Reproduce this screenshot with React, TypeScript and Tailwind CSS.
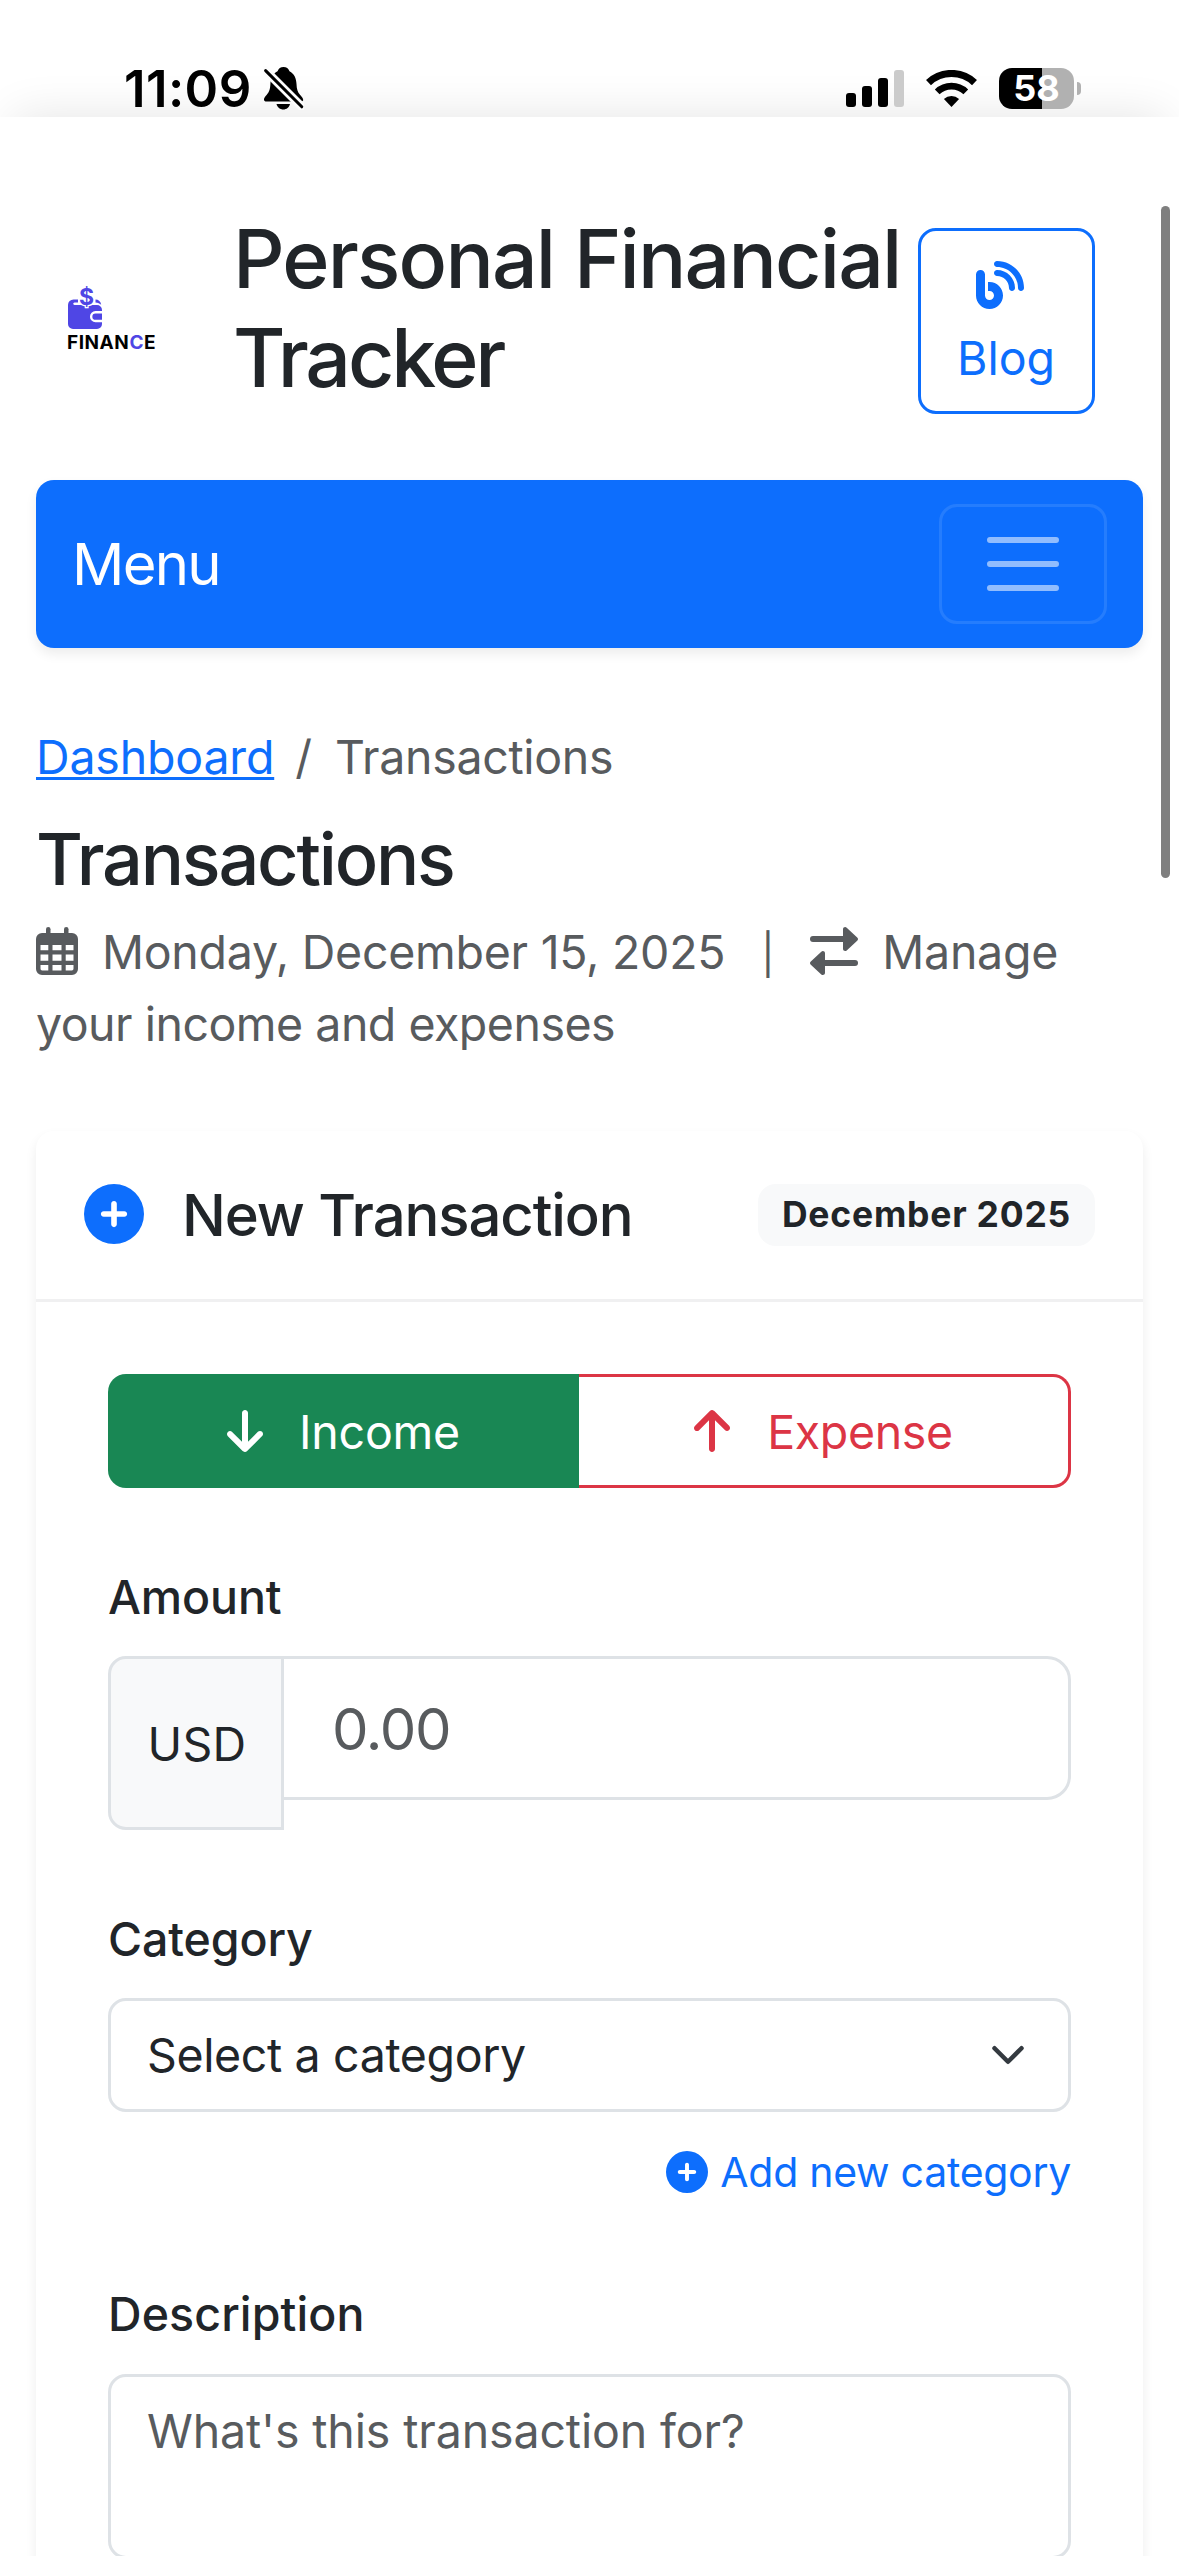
import { FaArrowDown, FaArrowUp, FaBlog, FaCirclePlus } from "react-icons/fa6";

const CalendarIcon = () => (
  <svg className="inline w-[42px] h-12 mr-6 align-[-6px]" viewBox="0 0 42 48" fill="currentColor">
    <rect x="10" y="0" width="4.500" height="12" rx="2.250" />
    <rect x="28" y="0" width="4.500" height="12" rx="2.250" />
    <path
      fillRule="evenodd"
      d="M6 6h30a6 6 0 0 1 6 6v30a6 6 0 0 1-6 6H6a6 6 0 0 1-6-6V12a6 6 0 0 1 6-6zM4.500 18v5.200h7.800V18zM16.500 18v5.200h9V18zM29.700 18v5.200h7.800V18zM4.500 27.500v6.200h7.800v-6.200zM16.500 27.500v6.200h9v-6.200zM29.700 27.500v6.200h7.800v-6.200zM6 38h-1.500v3.500c0 1.200.6 2 1.800 2h6V38zM16.500 38v5.500h9V38zM29.700 38v5.500h6c1.200 0 1.800-.8 1.800-2V38z"
    />
  </svg>
);

const ExchangeIcon = () => (
  <svg className="inline size-12 mr-6 align-[-6px]" viewBox="0 0 48 48" fill="currentColor">
    <rect x="0" y="9" width="44" height="6" rx="3" />
    <path d="M33 2.300C33 .4 35.200-.6 36.700.7l10.500 9.700c1.100 1 1.100 2.300 0 3.300L36.700 23.400c-1.500 1.300-3.700.3-3.700-1.700z" />
    <rect x="4" y="33" width="44" height="6" rx="3" />
    <path d="M15 26.300c0-1.900-2.200-2.900-3.700-1.600L.8 34.400c-1.100 1-1.100 2.300 0 3.300l10.500 9.700c1.500 1.300 3.700.3 3.700-1.700z" />
  </svg>
);

const BellSlashIcon = () => (
  <svg className="w-[41px] h-[44px]" viewBox="0 0 41 44">
    <path
      d="M20.5 1c3 0 5 1.6 6 4.2 4.600 2.400 6.800 7 7 12.800.2 5.200 1.100 8.200 3.500 10.800 1.800 2 3.200 3.500 3.200 5.200 0 .9-.9 1.500-2 1.500H3.400c-1.400 0-2.400-.8-2.400-2.100 0-1.700 1.300-3 2.600-4.500C6.300 26 7.100 23.200 7.400 18c.3-5.800 2.400-10.400 7.100-12.800C15.500 2.600 17.500 1 20.500 1z"
      fill="#000"
    />
    <path d="M13.500 38h13.500c-.8 3.400-3.500 5.500-6.700 5.500s-6-2.100-6.800-5.500z" fill="#000" />
    <path d="M-3 -1L43 45" stroke="#fdfdfd" strokeWidth="8.500" />
    <path d="M2.600 4.600L38.800 40.800" stroke="#000" strokeWidth="3" strokeLinecap="round" />
  </svg>
);

const SignalIcon = () => (
  <svg className="w-[58px] h-[37px]" viewBox="0 0 58 37">
    <rect x="0" y="23" width="10" height="14" rx="3" fill="#000" />
    <rect x="16" y="16" width="10" height="21" rx="3" fill="#000" />
    <rect x="32" y="8" width="10" height="29" rx="3" fill="#000" />
    <rect x="48" y="0" width="10" height="37" rx="3" fill="#cbcbcb" />
  </svg>
);

const WifiIcon = () => (
  <svg className="w-[51px] h-[37px]" viewBox="0 0 51 37" fill="none">
    <path d="M2.500 12.600A33.600 33.600 0 0 1 48.500 12.600" stroke="#000" strokeWidth="7.200" />
    <path d="M11.200 21.900A20.700 20.700 0 0 1 39.800 21.900" stroke="#000" strokeWidth="6.800" />
    <path d="M25.500 37L17.900 29a11.400 11.400 0 0 1 15.200 0z" fill="#000" />
  </svg>
);

const Battery = () => (
  <div className="flex items-center gap-[3px]">
    <div className="flex justify-center items-center w-[75px] h-[41px] rounded-[13px] bg-[linear-gradient(90deg,#000_43px,#b1b1b1_43px)] text-[36px] leading-none font-bold text-white">
      58
    </div>
    <div className="w-1 h-[13px] rounded-r-full bg-[#b1b1b1]" />
  </div>
);

const StatusBar = () => (
  <div className="relative flex items-center h-[117px] pt-[59px] pl-[124px] pr-[98px] overflow-hidden">
    <div className="absolute inset-x-[14px] -bottom-[60px] h-[60px] shadow-[0_0_48px_rgba(0,0,0,0.11)]" />
    <span className="relative text-[51px] leading-none font-semibold tracking-[0.4px] text-black">
      11:09
    </span>
    <div className="relative ml-[11px]">
      <BellSlashIcon />
    </div>
    <div className="relative flex items-center gap-[22px] ml-auto">
      <SignalIcon />
      <WifiIcon />
      <Battery />
    </div>
  </div>
);

const Logo = () => (
  <div className="w-[88px]">
    <svg className="w-[36px] h-[43px] overflow-visible" viewBox="0 0 36 43">
      <path
        d="M0 18a5.500 5.500 0 0 1 5.500-5.500H10v3H6.500c-1.700 0-1.700 2.500 0 2.500H29a5 5 0 0 1 5 5v14a5 5 0 0 1-5 5H5a5 5 0 0 1-5-5z"
        fill="#4f46e5"
      />
      <path d="M27.500 12.500c3 0 5.300 2 5.700 5.300-1.500-1.300-3.200-2-5.700-2.300z" fill="#4f46e5" />
      <path
        d="M34 25.300h-6.500a4.300 4.300 0 0 0 0 8.700H34"
        fill="#4f46e5"
        stroke="#fff"
        strokeWidth="2.400"
      />
      <text
        x="18.500"
        y="17.500"
        textAnchor="middle"
        fill="#4f46e5"
        stroke="#fff"
        strokeWidth="2.500"
        className="text-[23px] leading-none font-bold [paint-order:stroke]"
      >
        $
      </text>
    </svg>
    <div className="mt-[3px] -ml-px text-[19px] leading-[19px] font-bold tracking-[0.55px] text-black">
      FINAN<span className="text-[#4f46e5]">C</span>E
    </div>
  </div>
);

const Header = () => (
  <header className="flex items-start h-[363px] pt-[92px] pl-[68px] pr-[84px]">
    <div className="mt-[78px]">
      <Logo />
    </div>
    <h1 className="flex-1 ml-[77px] text-[80.500px] leading-[99px] font-medium">
      <span className="block tracking-[-1.830px] whitespace-nowrap">Personal Financial</span>
      <span className="block tracking-[-3.200px]">Tracker</span>
    </h1>
    <a className="flex flex-col items-center w-[177px] h-[186px] mt-[19px] pt-[18px] border-[3px] border-[#0d6efd] rounded-[18px] text-[#0d6efd]">
      <span className="flex items-center h-[72px] mr-[14px]">
        <FaBlog className="size-12" />
      </span>
      <span className="pt-px pr-px leading-[72px]">Blog</span>
    </a>
  </header>
);

const Navbar = () => (
  <nav className="flex justify-between items-center h-[168px] mx-9 px-9 rounded-[18px] bg-[#0d6efd] shadow-[0_6px_12px_rgba(0,0,0,0.075)]">
    <span className="text-[58px] leading-[90px] tracking-[-1.700px] text-white">Menu</span>
    <button className="flex justify-center items-center w-[168px] h-[120px] border-[3px] border-white/10 rounded-[18px]">
      <svg className="size-[90px]" viewBox="0 0 30 30">
        <path
          d="M4 7h22M4 15h22M4 23h22"
          stroke="rgba(255,255,255,0.55)"
          strokeWidth="2"
          strokeLinecap="round"
          strokeMiterlimit="10"
        />
      </svg>
    </button>
  </nav>
);

const PageHeading = () => (
  <div className="mt-[73px] px-9">
    <div className="flex leading-[72px] text-[#585b5e]">
      <a className="tracking-[-0.180px] text-[#0d6efd] underline decoration-[3px] underline-offset-[3px] [text-decoration-skip-ink:none]">
        Dashboard
      </a>
      <span className="pl-[21px] pr-[23px]">/</span>
      <span className="tracking-[-0.320px]">Transactions</span>
    </div>
    <h2 className="mt-[23px] text-[72px] leading-[86px] font-medium tracking-[-2.210px]">
      Transactions
    </h2>
    <p className="mt-[14px] leading-[72px] tracking-[-0.260px] text-[#585b5e]">
      <CalendarIcon />
      Monday, December 15, 2025
      <span className="inline-block w-[85px] text-[40px] leading-none text-center">|</span>
      <ExchangeIcon />
      Manage <span className="tracking-[-0.500px]">your income and expenses</span>
    </p>
  </div>
);

const TransactionCard = () => (
  <section className="mt-[71px] mx-9 h-[1700px] rounded-[18px] bg-white shadow-[0_6px_12px_rgba(0,0,0,0.075)]">
    <div className="flex items-center h-[171px] px-12 border-b-[3px] border-[#f0f0f1]">
      <FaCirclePlus className="size-[60px] mr-[38px] mb-[3px] text-[#0d6efd]" />
      <h3 className="text-[58px] leading-[72px] font-medium tracking-[-1.100px]">
        New Transaction
      </h3>
      <span className="flex justify-center items-center w-[337px] h-[62px] ml-auto rounded-[18px] bg-[#f8f9fa] text-[35.500px] leading-none font-bold tracking-[0.780px]">
        December 2025
      </span>
    </div>
    <form className="px-[72px] pt-[72px]">
      <div className="flex h-[114px]">
        <button
          type="button"
          className="flex justify-center items-center w-[471px] rounded-l-[18px] bg-[#198754] text-white"
        >
          <FaArrowDown className="w-9 h-12 mr-[36px]" />
          <span className="pt-[3px] tracking-[-0.200px]">Income</span>
        </button>
        <button
          type="button"
          className="flex flex-1 justify-center items-center border-[3px] border-l-0 border-[#dc3545] rounded-r-[18px] tracking-[-0.360px] text-[#dc3545]"
        >
          <FaArrowUp className="w-9 h-12 mr-[37px]" />
          <span className="pt-[3px]">Expense</span>
        </button>
      </div>

      <label className="block mt-[73px] mb-[23px] leading-[72px] font-medium tracking-[-0.100px]">
        Amount
      </label>
      <div className="flex items-start h-[174px]">
        <span className="flex shrink-0 justify-center items-center w-[176px] h-[174px] pt-[3px] pl-[2px] border-[3px] border-[#dee2e6] rounded-l-[18px] bg-[#f8f9fa] tracking-[0.300px]">
          USD
        </span>
        <input
          type="text"
          placeholder="0.00"
          className="flex-1 min-w-0 h-[144px] -ml-[3px] px-12 pt-[2px] border-[3px] border-[#dee2e6] rounded-r-[24px] text-[58px] tracking-[-1.310px] placeholder:text-[#585b5e]"
        />
      </div>

      <label className="block mt-[73px] mb-[23px] leading-[72px] font-medium tracking-[-0.100px]">
        Category
      </label>
      <div className="relative">
        <select className="block w-full h-[114px] px-9 pt-[2px] border-[3px] border-[#dee2e6] rounded-[18px] bg-white appearance-none tracking-[-0.370px]">
          <option>Select a category</option>
        </select>
        <svg className="absolute right-[45px] top-[39px] size-9" viewBox="0 0 16 16" fill="none">
          <path
            d="m2 5 6 6 6-6"
            stroke="#343a40"
            strokeWidth="2"
            strokeLinecap="round"
            strokeLinejoin="round"
          />
        </svg>
      </div>
      <div className="flex justify-end items-center mt-[28px] text-[41px] leading-[63px] tracking-[-0.280px] text-[#0d6efd]">
        <FaCirclePlus className="size-[42px] mr-3" />
        <span className="pt-px">Add new category</span>
      </div>

      <label className="block mt-[74px] mb-6 leading-[72px] font-medium tracking-[0.100px]">
        Description
      </label>
      <textarea
        placeholder="What's this transaction for?"
        className="block w-full h-[185px] px-9 py-[18px] border-[3px] border-[#dee2e6] rounded-[18px] leading-[72px] tracking-[-0.130px] resize-none placeholder:text-[#585b5e]"
      />
    </form>
  </section>
);

const App = () => {
  return (
    <div className="relative w-[1179px] h-[2556px] overflow-hidden bg-white font-['Inter',sans-serif] text-[46.500px] text-[#212529]">
      <StatusBar />
      <Header />
      <Navbar />
      <PageHeading />
      <TransactionCard />
      {/* scroll indicator */}
      <div className="absolute top-[206px] right-[9px] w-[9px] h-[672px] rounded-full bg-[#7f7f7f]" />
    </div>
  );
};

export default App;
